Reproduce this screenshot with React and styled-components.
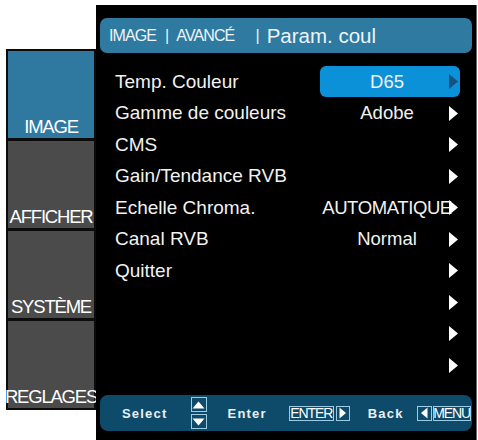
import React from "react";
import styled, { createGlobalStyle } from "styled-components";

const Global = createGlobalStyle`
  html, body { margin: 0; padding: 0; background: #ffffff; }
  * { box-sizing: border-box; }
`;

const Page = styled.div`
  width: 478px;
  height: 440px;
  overflow: hidden;
  display: flex;
  align-items: flex-start;
  padding: 5px 0 0 6px;
  background: #ffffff;
  font-family: "Liberation Sans", Arial, sans-serif;
`;

const Sidebar = styled.div`
  margin-top: 44px;
  width: 90px;
  padding: 2px;
  background: #0c0c0c;
  display: flex;
  flex-direction: column;
  gap: 3px;
`;

const Tab = styled.div`
  height: 87px;
  background: ${(p) => (p.$active ? "#2f79a1" : "#4b4b4b")};
  display: flex;
  align-items: flex-end;
  justify-content: center;
  padding-bottom: 2px;
  color: #ffffff;
  font-size: 18.5px;
  line-height: 1;
  letter-spacing: -1.2px;
  white-space: nowrap;
`;

const Panel = styled.div`
  width: 381px;
  height: 435px;
  background: #000000;
  border-right: 1px solid #6a6a6a;
  padding: 13px 4px 0 4px;
  display: flex;
  flex-direction: column;
`;

const Header = styled.div`
  height: 35px;
  border-radius: 7px;
  background: #2e7aa0;
  display: flex;
  align-items: center;
  padding-left: 9px;
  color: #eef4f8;
  white-space: nowrap;
`;

const Crumb = styled.span`
  font-size: 16px;
  letter-spacing: -0.9px;
  margin-left: ${(p) => p.$ml || 0}px;
`;

const Title = styled.span`
  font-size: 20.5px;
  margin-left: ${(p) => p.$ml || 0}px;
`;

const List = styled.div`
  margin-top: 13px;
  display: flex;
  flex-direction: column;
`;

const Row = styled.div`
  height: 31.5px;
  display: flex;
  align-items: center;
  padding: 0 12px 0 15px;
  color: #f2f2f2;
  font-size: 19px;
`;

const Label = styled.div`
  flex: 1;
  white-space: nowrap;
`;

const ValueGroup = styled.div`
  width: 140px;
  height: 31px;
  border-radius: 6px;
  background: ${(p) => (p.$selected ? "#0a91d7" : "transparent")};
  display: flex;
  align-items: center;
  padding: 0 2px 0 7px;
`;

const Value = styled.div`
  width: 120px;
  display: flex;
  justify-content: center;
  white-space: nowrap;
  font-size: 18.5px;
  letter-spacing: ${(p) => (p.$tight ? "-0.4px" : "0")};
`;

const ArrowSvg = styled.svg`
  margin-left: 2px;
  flex: none;
`;

const Footer = styled.div`
  margin-top: 14px;
  height: 36px;
  border-radius: 8px;
  background: #0e4b6a;
  display: flex;
  align-items: center;
  padding-left: 22px;
  color: #e9f0f4;
`;

const FootText = styled.span`
  font-weight: bold;
  font-size: 13px;
  letter-spacing: 1.2px;
  margin-left: ${(p) => p.$ml || 0}px;
  white-space: nowrap;
`;

const KeyPair = styled.div`
  display: flex;
  align-items: center;
  gap: ${(p) => p.$gap}px;
  margin-left: ${(p) => p.$ml || 0}px;
`;

const KeyBox = styled.div`
  height: 15px;
  width: ${(p) => p.$w}px;
  border: 1.5px solid #9ccbe3;
  display: flex;
  align-items: center;
  justify-content: center;
  font-size: 14px;
  letter-spacing: -1.1px;
  color: #ffffff;
  line-height: 1;
  overflow: hidden;
`;

const UpDown = styled.div`
  display: flex;
  flex-direction: column;
  gap: 2px;
  margin-left: ${(p) => p.$ml || 0}px;
`;

const rows = [
  { label: "Temp. Couleur", value: "D65", selected: true },
  { label: "Gamme de couleurs", value: "Adobe" },
  { label: "CMS", value: "" },
  { label: "Gain/Tendance RVB", value: "" },
  { label: "Echelle Chroma.", value: "AUTOMATIQUE", tight: true },
  { label: "Canal RVB", value: "Normal" },
  { label: "Quitter", value: "" },
  { label: "", value: "" },
  { label: "", value: "" },
  { label: "", value: "" },
];

function RowArrow({ color }) {
  return (
    <ArrowSvg width="9" height="15" viewBox="0 0 9 15">
      <polygon points="0,0 9,7.5 0,15" fill={color} />
    </ArrowSvg>
  );
}

function Tri({ dir }) {
  if (dir === "up" || dir === "down") {
    const pts = dir === "up" ? "0.5,9.5 6.5,2.5 12.5,9.5" : "0.5,2.5 6.5,9.5 12.5,2.5";
    return (
      <svg width="13" height="12" viewBox="0 0 13 12">
        <polygon points={pts} fill="#ffffff" />
      </svg>
    );
  }
  const pts = dir === "right" ? "2.5,0.5 9,6 2.5,11.5" : "9.5,0.5 3,6 9.5,11.5";
  return (
    <svg width="12" height="12" viewBox="0 0 12 12">
      <polygon points={pts} fill="#ffffff" />
    </svg>
  );
}

export default function App() {
  return (
    <>
      <Global />
      <Page>
        <Sidebar>
          <Tab $active>IMAGE</Tab>
          <Tab>AFFICHER</Tab>
          <Tab>SYSTÈME</Tab>
          <Tab>REGLAGES</Tab>
        </Sidebar>
        <Panel>
          <Header>
            <Crumb>IMAGE</Crumb>
            <Crumb $ml={9}>|</Crumb>
            <Crumb $ml={8}>AVANCÉ</Crumb>
            <Crumb $ml={21}>|</Crumb>
            <Title $ml={8}>Param. coul</Title>
          </Header>
          <List>
            {rows.map((r, i) => (
              <Row key={i}>
                <Label>{r.label}</Label>
                <ValueGroup $selected={r.selected}>
                  <Value $tight={r.tight}>{r.value}</Value>
                  <RowArrow color={r.selected ? "#1b4f7f" : "#ffffff"} />
                </ValueGroup>
              </Row>
            ))}
          </List>
          <Footer>
            <FootText>Select</FootText>
            <UpDown $ml={23}>
              <KeyBox $w={16}>
                <Tri dir="up" />
              </KeyBox>
              <KeyBox $w={16}>
                <Tri dir="down" />
              </KeyBox>
            </UpDown>
            <FootText $ml={21}>Enter</FootText>
            <KeyPair $gap={2} $ml={22}>
              <KeyBox $w={45}>ENTER</KeyBox>
              <KeyBox $w={14}>
                <Tri dir="right" />
              </KeyBox>
            </KeyPair>
            <FootText $ml={18}>Back</FootText>
            <KeyPair $gap={1} $ml={13}>
              <KeyBox $w={15}>
                <Tri dir="left" />
              </KeyBox>
              <KeyBox $w={38}>MENU</KeyBox>
            </KeyPair>
          </Footer>
        </Panel>
      </Page>
    </>
  );
}
